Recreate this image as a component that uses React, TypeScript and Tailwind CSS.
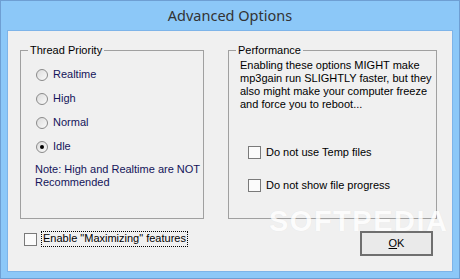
import React from "react";

function Radio({ label, checked }: { label: string; checked?: boolean }) {
  return (
    <div className="h-[24px] flex items-center">
      <div className="w-[12px] h-[12px] rounded-full border border-[#8a8a8a] bg-gradient-to-br from-[#dcdcdc] to-[#fafafa] flex items-center justify-center">
        {checked && <div className="w-[4px] h-[4px] rounded-full bg-black" />}
      </div>
      <span className="ml-[5px] text-[#14145a] leading-[13px]">{label}</span>
    </div>
  );
}

function Check() {
  return <div className="w-[13px] h-[13px] border border-[#7a7a7a] bg-[#fbfbfb] shrink-0" />;
}

export default function App() {
  return (
    <div className="w-[460px] h-[279px] bg-[#8cc8f8] border border-[#6e9fd3] flex flex-col font-['Liberation_Sans',Arial,sans-serif] text-[11px] text-black">
      <div className="h-[29px] flex items-center justify-center pt-[1px] text-[14.5px] text-[#333333] font-['Noto_Sans',sans-serif]">
        Advanced Options
      </div>
      <div className="mx-[6px] mb-[6px] flex-1 border border-[#7db4e9] bg-[#f0f0f0] relative pl-[12px] pr-[15px] pt-[12.5px] flex flex-col">
        <div className="flex gap-[24px]">
          <fieldset className="w-[184px] h-[175px] border border-[#a0a0a0] pl-[15px]">
            <legend className="ml-[-8px] px-[2px] leading-[13px]">Thread Priority</legend>
            <div className="pt-[6px]">
              <Radio label="Realtime" />
              <Radio label="High" />
              <Radio label="Normal" />
              <Radio label="Idle" checked />
            </div>
            <div className="ml-[-1px] mt-[4.5px] leading-[13.3px] text-[#14145a] whitespace-nowrap">
              Note: High and Realtime are NOT
              <br />
              Recommended
            </div>
          </fieldset>
          <fieldset className="w-[209px] h-[175px] border border-[#a0a0a0] pl-[11px]">
            <legend className="ml-[-4px] px-[2px] leading-[13px]">Performance</legend>
            <div className="pt-[2px] leading-[13.3px] whitespace-nowrap">
              Enabling these options MIGHT make
              <br />
              mp3gain run SLIGHTLY faster, but they
              <br />
              also might make your computer freeze
              <br />
              and force you to reboot...
            </div>
            <div className="ml-[8px] mt-[34px] flex items-center h-[14px]">
              <Check />
              <span className="ml-[5px]">Do not use Temp files</span>
            </div>
            <div className="ml-[8px] mt-[19px] flex items-center h-[14px]">
              <Check />
              <span className="ml-[5px]">Do not show file progress</span>
            </div>
          </fieldset>
        </div>
        <div className="mt-[12px] flex items-start">
          <div className="ml-[4px] mt-[2px]">
            <Check />
          </div>
          <div className="ml-[4px] h-[16px] border border-dotted border-black px-[1px] flex items-center whitespace-nowrap">
            Enable "Maximizing" features
          </div>
          <button className="ml-auto mr-[4px] w-[73px] h-[25px] border-2 border-[#6f6f6f] bg-[#eaeaea] flex items-center justify-center">
            <span>
              <span className="underline">O</span>K
            </span>
          </button>
        </div>
        <div className="absolute left-[261px] top-[180px] h-[20px] leading-[20px] text-[29px] font-bold font-['Liberation_Sans',sans-serif] text-white tracking-[1.5px] pointer-events-none [text-shadow:0_0_1px_rgba(0,0,0,0.08)] opacity-80">
          SOFTPEDIA
        </div>
      </div>
    </div>
  );
}
